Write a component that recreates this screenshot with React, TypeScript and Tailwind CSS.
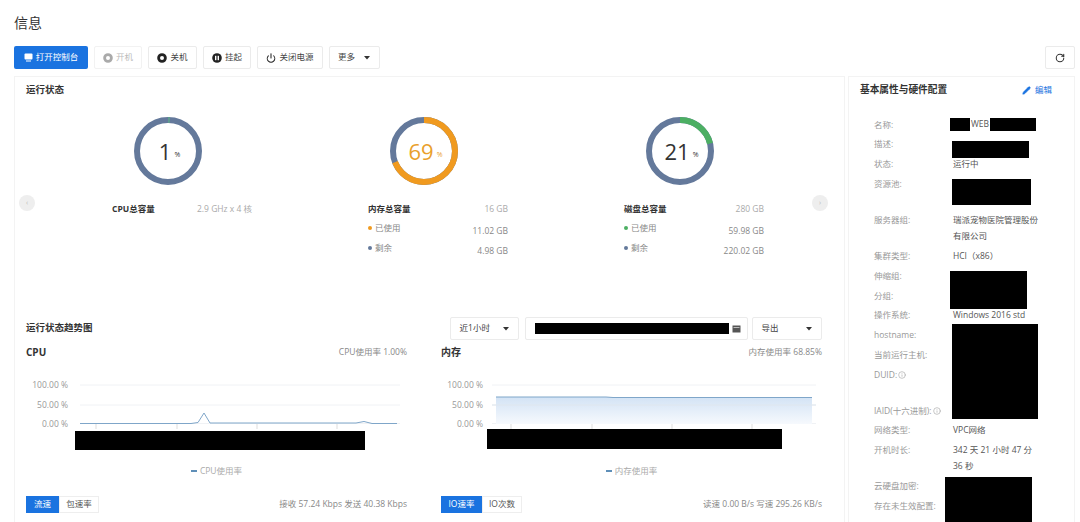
import React from "react";
import { Info, Pencil, Power, RotateCw } from "lucide-react";

const blue = "#1a73e0";

function Caret() {
  return (
    <svg width="6" height="4" viewBox="0 0 6 4">
      <path d="M0 0h6L3 3.5z" fill="#333" />
    </svg>
  );
}

function Ring({ color = "#222" }: { color?: string }) {
  return (
    <svg width="10" height="10" viewBox="0 0 10 10">
      <circle cx="5" cy="5" r="3.4" fill="none" stroke={color} strokeWidth="2.8" />
    </svg>
  );
}

function ToolButton({ icon, label, className }: { icon?: React.ReactNode; label: string; className: string }) {
  return (
    <button className={`flex h-[23px] items-center justify-center gap-[3px] rounded-[2px] border border-[#ebebeb] bg-white text-[8.5px] text-[#444] ${className}`}>
      {icon}
      {label}
    </button>
  );
}

function Gauge({ pct, color, textColor }: { pct: number; color: string; textColor: string }) {
  const len = 2 * Math.PI * 31;
  return (
    <div className="relative mx-auto h-[68px] w-[68px]">
      <svg width="68" height="68" viewBox="0 0 68 68" className="-rotate-90">
        <circle cx="34" cy="34" r="31" fill="none" stroke="#64799b" strokeWidth="6" />
        <circle cx="34" cy="34" r="31" fill="none" stroke={color} strokeWidth="6" strokeDasharray={`${(len * pct) / 100} ${len}`} />
      </svg>
      <div className={`absolute inset-0 flex items-center justify-center pl-[3px] ${textColor}`}>
        <span className="text-[22px] leading-none">{pct}</span>
        <span className="mt-[9px] ml-[3px] text-[7px]">%</span>
      </div>
    </div>
  );
}

type Stat = { name: string; total: string; used?: string; left?: string; dot?: string };

function GaugeColumn({ pct, color, textColor, stat }: { pct: number; color: string; textColor: string; stat: Stat }) {
  return (
    <div className="w-[256px]">
      <Gauge pct={pct} color={color} textColor={textColor} />
      <div className="mt-[14px] ml-[72px] w-[140px] text-[8.5px] text-[#888]">
        <div className="flex h-[20px] items-center justify-between">
          <span className="font-bold text-[#333]">{stat.name}</span>
          <span className="text-[#aaa]">{stat.total}</span>
        </div>
        {stat.used && (
          <>
            <div className="flex h-[20px] justify-between">
              <span className="flex h-[18px] items-center gap-[3px]">
                <span className={`h-[4px] w-[4px] rounded-full ${stat.dot}`} />
                已使用
              </span>
              <span className="pt-[6px]">{stat.used}</span>
            </div>
            <div className="flex h-[20px] justify-between">
              <span className="flex h-[18px] items-center gap-[3px]">
                <span className="h-[4px] w-[4px] rounded-full bg-[#64799b]" />
                剩余
              </span>
              <span className="pt-[6px]">{stat.left}</span>
            </div>
          </>
        )}
      </div>
    </div>
  );
}

function Chart({ line, area, lineStart, lineEnd, redact }: { line: string; area?: boolean; lineStart: number; lineEnd: number; redact: [number, number, number, number] }) {
  const labels: [string, number][] = [
    ["100.00 %", 10],
    ["50.00 %", 30],
    ["0.00 %", 48.5],
  ];
  return (
    <svg width="381" height="90" viewBox="0 0 381 90" className="block">
      <defs>
        <linearGradient id="memArea" x1="0" y1="0" x2="0" y2="1">
          <stop offset="0" stopColor="#d3e3f5" />
          <stop offset="1" stopColor="#f6f9fd" />
        </linearGradient>
      </defs>
      {labels.map(([t, y]) => (
        <g key={t}>
          <text x="42" y={y + 3} textAnchor="end" fontSize="8.5" fill="#999">
            {t}
          </text>
          <line x1={lineStart} x2={lineEnd} y1={y} y2={y} stroke="#f0f2f5" />
        </g>
      ))}
      {area && <rect x="55" y="22" width="316" height="27" fill="url(#memArea)" />}
      {area && <line x1={lineStart} x2={lineEnd} y1="30" y2="30" stroke="#dfe6ee" />}
      {[70, 151, 231, 311].map((x) => (
        <line key={x} x1={x} x2={x} y1="49" y2="54" stroke="#ddd" />
      ))}
      <path d={line} fill="none" stroke="#7fa6c9" strokeWidth="1" />
      <rect x={redact[0]} y={redact[1]} width={redact[2]} height={redact[3]} fill="#000" />
    </svg>
  );
}

function TrendColumn({ title, usage, chart, legend, tabs, rate }: { title: string; usage: string; chart: React.ReactNode; legend: string; tabs: [string, string, string, string]; rate: string }) {
  return (
    <div className="w-[381px]">
      <div className="flex h-[20px] items-center justify-between">
        <span className="text-[10px] font-bold text-[#333]">{title}</span>
        <span className="text-[8.5px] text-[#888]">{usage}</span>
      </div>
      <div className="mt-[13px]">{chart}</div>
      <div className="flex h-[12px] items-center justify-center gap-[3px] text-[8.5px] text-[#aaa]">
        <span className="h-[1.5px] w-[6px] bg-[#5f8fb8]" />
        {legend}
      </div>
      <div className="mt-[19px] flex items-center justify-between">
        <div className="flex h-[17px] text-[8.5px]">
          <span className={`flex items-center justify-center bg-[#1a73e0] text-white ${tabs[2]}`}>{tabs[0]}</span>
          <span className={`flex items-center justify-center border border-[#eee] text-[#555] ${tabs[3]}`}>{tabs[1]}</span>
        </div>
        <span className="text-[8.5px] text-[#888]">{rate}</span>
      </div>
    </div>
  );
}

type Row = { label: string; value?: string; tall?: boolean; info?: boolean; second?: string };

const rows: Row[] = [
  { label: "名称:" },
  { label: "描述:" },
  { label: "状态:", value: "运行中" },
  { label: "资源池:", tall: true },
  { label: "服务器组:", value: "瑞派宠物医院管理股份", second: "有限公司", tall: true },
  { label: "集群类型:", value: "HCI（x86）" },
  { label: "伸缩组:" },
  { label: "分组:" },
  { label: "操作系统:", value: "Windows 2016 std" },
  { label: "hostname:" },
  { label: "当前运行主机:" },
  { label: "DUID:", info: true, tall: true },
  { label: "IAID(十六进制):", info: true },
  { label: "网络类型:", value: "VPC网络" },
  { label: "开机时长:", value: "342 天 21 小时 47 分", second: "36 秒", tall: true },
  { label: "云硬盘加密:" },
  { label: "存在未生效配置:" },
];

export default function App() {
  return (
    <div className="h-[522px] w-[1080px] overflow-hidden bg-white px-[14px] font-['Open_Sans','Noto_Sans_CJK_SC',sans-serif]">
      <h1 className="pt-[13px] text-[14px] leading-[20px] text-[#333]">信息</h1>

      <div className="mt-[13px] flex gap-[6px]">
        <button className="flex h-[23px] w-[74px] items-center justify-center gap-[3px] rounded-[2px] bg-[#1a73e0] text-[8.5px] text-white">
          <svg width="9" height="9" viewBox="0 0 9 9">
            <rect x="0.5" y="0.5" width="8" height="6" rx="1" fill="#fff" />
            <rect x="2" y="7.5" width="5" height="1" fill="#fff" />
          </svg>
          打开控制台
        </button>
        <ToolButton className="w-[48px] border-[#f2f2f2] text-[#bbb]" icon={<Ring color="#aaa" />} label="开机" />
        <ToolButton className="w-[49px]" icon={<Ring />} label="关机" />
        <ToolButton
          className="w-[48px]"
          icon={
            <svg width="10" height="10" viewBox="0 0 10 10">
              <circle cx="5" cy="5" r="4.8" fill="#222" />
              <rect x="3" y="2.8" width="1.4" height="4.4" fill="#fff" />
              <rect x="5.6" y="2.8" width="1.4" height="4.4" fill="#fff" />
            </svg>
          }
          label="挂起"
        />
        <ToolButton className="w-[66px]" icon={<Power size={10} strokeWidth={2.5} color="#222" />} label="关闭电源" />
        <button className="flex h-[23px] w-[51px] items-center justify-between rounded-[2px] border border-[#ebebeb] bg-white pr-[9px] pl-[8px] text-[8.5px] text-[#444]">
          更多
          <Caret />
        </button>
        <button className="ml-auto mr-[-9px] flex h-[23px] w-[30px] items-center justify-center rounded-[2px] border border-[#ebebeb] bg-white">
          <RotateCw size={10} strokeWidth={2.5} color="#333" />
        </button>
      </div>

      <div className="mt-[7px] flex gap-[3px]">
        <section className="relative h-[450px] w-[831px] shrink-0 border-t border-l border-r border-[#f3f3f3] pl-[11px]">
          <h2 className="pt-[7px] text-[9.5px] leading-[12px] font-bold text-[#333]">运行状态</h2>

          <div className="mt-[21px] ml-[14px] flex">
            <GaugeColumn pct={1} color="#5f9c8f" textColor="text-[#333]" stat={{ name: "CPU总容量", total: "2.9 GHz x 4 核" }} />
            <GaugeColumn
              pct={69}
              color="#f09a1f"
              textColor="text-[#e9a02c]"
              stat={{ name: "内存总容量", total: "16 GB", used: "11.02 GB", left: "4.98 GB", dot: "bg-[#f09a1f]" }}
            />
            <GaugeColumn
              pct={21}
              color="#4caf63"
              textColor="text-[#333]"
              stat={{ name: "磁盘总容量", total: "280 GB", used: "59.98 GB", left: "220.02 GB", dot: "bg-[#4caf63]" }}
            />
          </div>

          {/* 轮播箭头 */}
          <span className="absolute top-[118px] left-[4px] flex h-[16px] w-[16px] items-center justify-center rounded-full bg-[#eee] text-[7px] text-[#bbb]">‹</span>
          <span className="absolute top-[118px] left-[797px] flex h-[16px] w-[16px] items-center justify-center rounded-full bg-[#eee] text-[7px] text-[#bbb]">›</span>

          <div className="mt-[58px] flex h-[23px] items-center">
            <h2 className="text-[9.5px] font-bold text-[#333]">运行状态趋势图</h2>
            <div className="ml-[357px] flex h-[23px] w-[372px] text-[8.5px] text-[#444]">
              <div className="flex w-[69px] items-center justify-between rounded-[2px] border border-[#ebebeb] px-[9px]">
                近1小时
                <Caret />
              </div>
              <div className="ml-[6px] flex w-[223px] items-center gap-[3px] rounded-[2px] border border-[#ebebeb] pl-[9px]">
                <span className="h-[11px] w-[194px] bg-black" />
                <svg width="9" height="9" viewBox="0 0 9 9">
                  <path d="M0.5 1.5h8v7h-8z" fill="#555" />
                  <path d="M1.5 3.5h6" stroke="#fff" strokeWidth="0.6" />
                </svg>
              </div>
              <div className="ml-[4px] flex w-[70px] items-center justify-between rounded-[2px] border border-[#ebebeb] px-[9px]">
                导出
                <Caret />
              </div>
            </div>
          </div>

          <div className="mt-[2px] flex gap-[34px]">
            <TrendColumn
              title="CPU"
              usage="CPU使用率 1.00%"
              legend="CPU使用率"
              tabs={["流速", "包速率", "w-[33px]", "w-[40px]"]}
              rate="接收 57.24 Kbps  发送 40.38 Kbps"
              chart={
                <Chart
                  lineStart={54}
                  lineEnd={374}
                  redact={[49, 56, 290, 19]}
                  line="M54 48.5H165L172 47.5L178 38L184 48H330L338 46.5L346 48.5H371"
                />
              }
            />
            <TrendColumn
              title="内存"
              usage="内存使用率 68.85%"
              legend="内存使用率"
              tabs={["IO速率", "IO次数", "w-[41px]", "w-[40px]"]}
              rate="读速 0.00 B/s  写速 295.26 KB/s"
              chart={<Chart area lineStart={51} lineEnd={375} redact={[46, 54, 295, 20]} line="M55 22H165L172 22.5H371" />}
            />
          </div>
        </section>

        <aside className="relative h-[450px] w-[227px] shrink-0 overflow-hidden border-t border-l border-r border-[#f3f3f3]">
          <div className="flex h-[26px] items-center justify-between pt-[1px] pr-[22px] pl-[11px]">
            <h2 className="text-[9.7px] font-bold text-[#333]">基本属性与硬件配置</h2>
            <span className="flex items-center gap-[4px] text-[8.5px]" style={{ color: blue }}>
              <Pencil size={9} fill={blue} strokeWidth={1.5} />
              编辑
            </span>
          </div>

          <div className="mt-[12px] pl-[25px] text-[8.5px]">
            {rows.map((r) => (
              <div key={r.label} className={`flex ${r.tall ? "h-[36px]" : "h-[19.8px]"}`}>
                <span className="flex h-[19.8px] w-[79px] shrink-0 items-center gap-[1px] text-[#999]">
                  {r.label}
                  {r.info && <Info size={8} color="#aaa" />}
                </span>
                <div className="text-[#555]">
                  {r.value && <div className="flex h-[19.8px] items-center">{r.value}</div>}
                  {r.second && <div className="-mt-[2px] flex h-[16px] items-center">{r.second}</div>}
                </div>
              </div>
            ))}
          </div>

          {/* 打码遮挡 */}
          <span className="absolute top-[41px] left-[101px] h-[13px] w-[20px] bg-black" />
          <span className="absolute top-[41px] left-[122px] text-[8.5px] text-[#555]">WEB</span>
          <span className="absolute top-[41px] left-[141px] h-[13px] w-[46px] bg-black" />
          <span className="absolute top-[64px] left-[103px] h-[17px] w-[77px] bg-black" />
          <span className="absolute top-[102px] left-[103px] h-[26px] w-[79px] bg-black" />
          <span className="absolute top-[194px] left-[101px] h-[38px] w-[77px] bg-black" />
          <span className="absolute top-[247px] left-[103px] h-[95px] w-[86px] bg-black" />
          <span className="absolute top-[400px] left-[96px] h-[50px] w-[87px] bg-black" />
        </aside>
      </div>
    </div>
  );
}
